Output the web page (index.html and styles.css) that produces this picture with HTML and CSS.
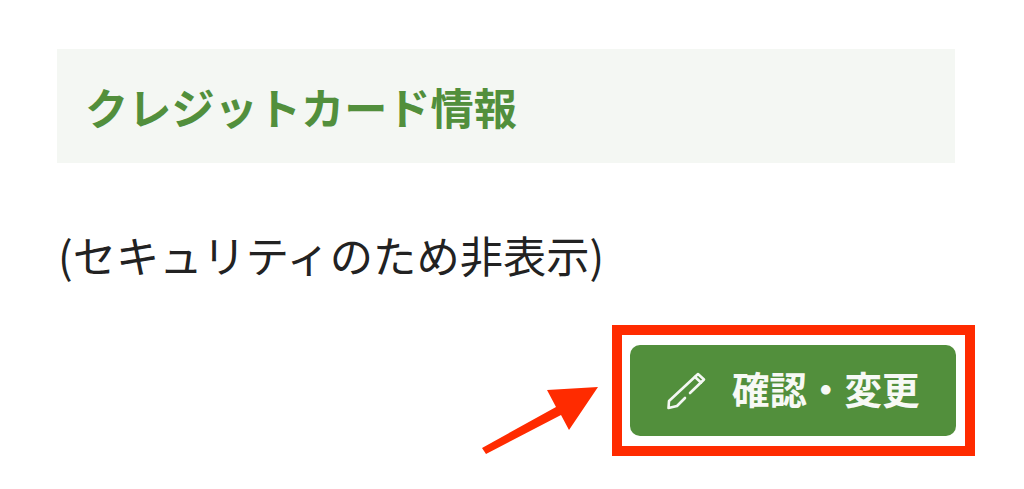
FILE: index.html
```html
<!DOCTYPE html>
<html lang="ja">
<head>
    <meta charset="UTF-8">
    <meta name="viewport" content="width=device-width, initial-scale=1.0">
    <title>クレジットカード情報</title>
    <link rel="stylesheet" href="styles.css">
</head>
<body>
    <div class="page">
        <h2 class="section-title">クレジットカード情報</h2>
        <p class="card-note">(セキュリティのため非表示)</p>
        <div class="actions">
            <div class="highlight">
                <svg class="arrow" width="122" height="72" viewBox="0 0 122 72">
                    <polygon points="2,63 76,22 67,5 118,2 89,45 81,30 6,69" fill="#ff2b00"/>
                </svg>
                <a class="edit-btn" href="#">
                    <svg class="pencil" width="40" height="38" viewBox="-1 -1 40 38" fill="none" stroke="#f4f7f3" stroke-width="2.6" stroke-linejoin="round" stroke-linecap="round">
                        <path d="M23 20L37 6.500L31 1L2 28L1.500 35L10 33L18 25"/>
                        <path d="M28 4L34 9.500"/>
                    </svg>
                    <span class="edit-label">確認・変更</span>
                </a>
            </div>
        </div>
    </div>
</body>
</html>
```

FILE: styles.css
```css
body {
    margin: 0;
    background: #fff;
    font-family: "Noto Sans CJK JP", "Noto Sans", sans-serif;
}
.page {
    width: 898px;
    padding: 49px 0 0 57px;
}
.section-title {
    display: flex;
    align-items: center;
    height: 114px;
    margin: 0;
    padding-left: 28px;
    background: #f4f7f3;
    color: #528f3c;
    font-size: 43.200px;
    font-weight: 700;
}
.card-note {
    margin: 59px 0 0 1px;
    color: #222;
    font-size: 43.300px;
    line-height: 64px;
}
.actions {
    display: flex;
    justify-content: flex-end;
    margin-top: 39px;
}
.highlight {
    position: relative;
    margin-right: -20px;
    padding: 10px 9px 10px 8px;
    border: 10px solid #ff2b00;
}
.arrow {
    position: absolute;
    left: -142px;
    top: 50px;
}
.edit-btn {
    display: flex;
    align-items: center;
    box-sizing: border-box;
    width: 326px;
    height: 91px;
    padding-left: 36px;
    border-radius: 10px;
    background: #528f3c;
    color: #f7f9f5;
    font-size: 37.500px;
    font-weight: 700;
    text-decoration: none;
}
.pencil {
    margin-right: 26px;
}
.edit-label {
    padding-bottom: 6px;
}
```
